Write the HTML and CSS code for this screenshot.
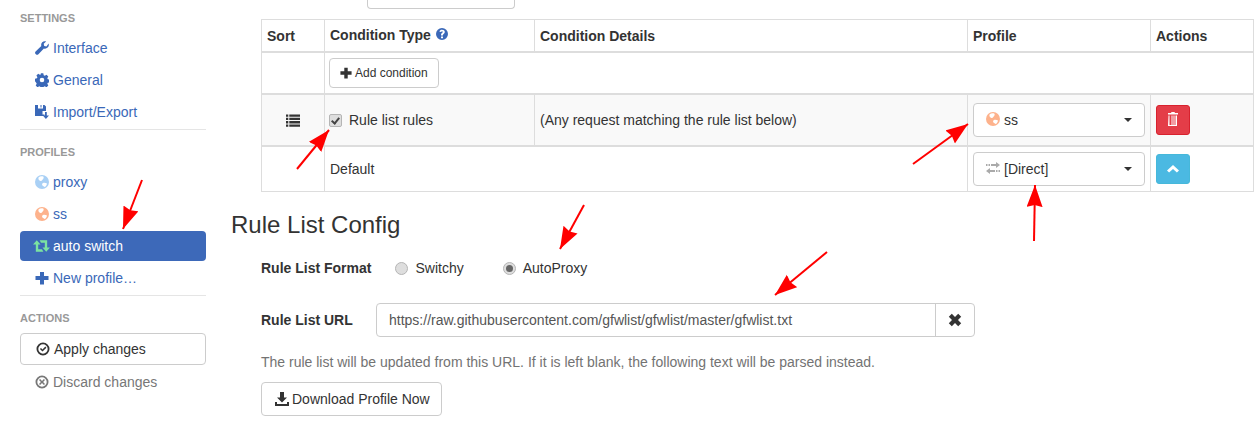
FILE: index.html
```html
<!DOCTYPE html>
<html>

<head>
    <meta charset="utf-8">
    <meta name="viewport" content="width=device-width,initial-scale=1.0">
    <title>auto switch</title>
    <link rel="stylesheet" href="styles.css">
</head>

<body>
    <svg class="defs" width="0" height="0">
        <symbol id="i-wrench" viewBox="0 0 14 14"><path d="M13.6 2.600c.5 1.500.1 3-1 4-1 1-2.400 1.300-3.700.9L3.400 13.200c-.7.7-1.800.7-2.500 0l-.3-.3c-.7-.7-.7-1.800 0-2.500L6.300 5C5.900 3.700 6.200 2.300 7.200 1.300 8.200.3 9.700-.1 11.100.4L8.700 2.800l.5 2.200 2.200.5z"/></symbol>
        <symbol id="i-cog" viewBox="0 0 14 14"><path fill-rule="evenodd" d="M5.700.3h2.600l.4 1.900 1.100.5 1.700-1 1.800 1.800-1 1.700.5 1.100 1.900.4v2.600l-1.900.4-.5 1.100 1 1.700-1.800 1.800-1.700-1-1.100.5-.4 1.900H5.700l-.4-1.900-1.100-.5-1.700 1-1.800-1.800 1-1.700-.5-1.100L0 8.300V5.700l1.900-.4.500-1.100-1-1.700 1.800-1.800 1.700 1 1.100-.5zM7 4.700a2.300 2.300 0 1 0 0 4.600 2.300 2.300 0 0 0 0-4.600z"/></symbol>
        <symbol id="i-floppy" viewBox="0 0 14 14"><path fill-rule="evenodd" d="M0 0h9.500L11 1.500V6H7.500v3.500h2V11H0zM3 0v3.500h5V0H6.500v2.500h-1V0z"/><path d="M10 7h1.800v3.500H14L10.900 14 7.800 10.500H10z"/></symbol>
        <symbol id="i-globe" viewBox="0 0 14 14"><path fill-rule="evenodd" d="M7 0a7 7 0 1 1 0 14A7 7 0 0 1 7 0zM3.500 2.500C3 4 4 5.500 5.500 6c1 .3 1.300-.5 2-1.200C8.300 4 9 3 8.500 1.800 7 1 5 1.200 3.500 2.500zM8 8c-1 .5-1.200 1.500-.5 2.500.5.800 1.500 1 2.500 1.500 1-.8 1.800-2 2-3.500C11 8 9.500 7.500 8 8z"/></symbol>
        <symbol id="i-retweet" viewBox="0 0 18 13"><path d="M4 .5L8 5H5.500v5h4l1.500 2.500H3V5H0z"/><path d="M14 12.500L10 8h2.500V3H8.500L7 .5h8V8h3z"/></symbol>
        <symbol id="i-plus" viewBox="0 0 14 14"><path d="M5 1h4v4h4.500v4H9v4.500H5V9H.5V5H5z"/></symbol>
        <symbol id="i-ok" viewBox="0 0 14 14"><path fill-rule="evenodd" d="M7 .5a6.500 6.500 0 1 1 0 13 6.500 6.500 0 0 1 0-13zm0 1.800a4.700 4.700 0 1 0 0 9.400 4.700 4.700 0 0 0 0-9.400z"/><path d="M3.900 7l1.100-1.100 1.500 1.500 2.800-2.800 1.100 1.100-3.900 3.900z"/></symbol>
        <symbol id="i-no" viewBox="0 0 14 14"><path fill-rule="evenodd" d="M7 .5a6.500 6.500 0 1 1 0 13 6.500 6.500 0 0 1 0-13zm0 1.800a4.700 4.700 0 1 0 0 9.400 4.700 4.700 0 0 0 0-9.400z"/><path d="M5.100 4L7 5.900 8.900 4 10 5.100 8.100 7 10 8.900 8.900 10 7 8.100 5.100 10 4 8.900 5.900 7 4 5.100z"/></symbol>
        <symbol id="i-help" viewBox="0 0 12 12"><path fill-rule="evenodd" d="M6 0a6 6 0 1 1 0 12A6 6 0 0 1 6 0zM5 8.500v1.700h2V8.500zM6 1.800c-1.300 0-2.300.6-2.500 1.900l1.600.3c.1-.5.400-.7.900-.7s.8.200.8.600c0 .8-1.800 1-1.800 2.800v.8h2v-.6c0-1 1.800-1.200 1.800-3C8.800 2.600 7.600 1.800 6 1.800z"/></symbol>
        <symbol id="i-list" viewBox="0 0 14 14"><path d="M0 .5h2.300v2.300H0zM3.300.5H14v2.300H3.300zM0 3.800h2.300v2.300H0zM3.300 3.800H14v2.300H3.300zM0 7.100h2.300v2.300H0zM3.300 7.100H14v2.300H3.300zM0 10.400h2.300v2.300H0zM3.300 10.400H14v2.300H3.300z"/></symbol>
        <symbol id="i-trash" viewBox="0 0 12 14"><path d="M4.500 0h3l.5 1h3v1.500H1V1h3zM1.500 3.500h1V13h2V3.500h1V13h1V3.500h1V13h1V3.500h1.500V14h-9z"/></symbol>
        <symbol id="i-transfer" viewBox="0 -1 14 14"><path d="M0 2h1.500v2H0zM2.500 2H4v2H2.500zM5 2h5V0l4 3-4 3V4H5zM4 6v2h5v2H4v2L0 9zM10 8h1.500v2H10zM12.500 8H14v2h-1.500z"/></symbol>
        <symbol id="i-chevron" viewBox="0 0 12 8"><path d="M6 0l6 5.500L9.900 7.600 6 4 2.100 7.600 0 5.500z"/></symbol>
        <symbol id="i-remove" viewBox="0 0 14 14"><path d="M3.800.8L7 4l3.200-3.200 3 3L10 7l3.200 3.200-3 3L7 10l-3.200 3.200-3-3L4 7 .8 3.800z"/></symbol>
        <symbol id="i-download" viewBox="0 0 14 14"><path d="M5 0h4v5.500h3L7 10.500 2 5.500h3z"/><path d="M0 10h2v2h10v-2h2v4H0z"/></symbol>
        <marker id="head" markerUnits="userSpaceOnUse" markerWidth="24" markerHeight="18" refX="22" refY="8" orient="auto"><path d="M0 0L22 8L0 16L2 8z" fill="#f00"/></marker>
    </svg>

    <div id="wrap">
        <nav class="side">
            <div class="nav-label first">Settings</div>
            <a class="nav-item"><svg class="icon"><use href="#i-wrench"/></svg>Interface</a>
            <a class="nav-item"><svg class="icon"><use href="#i-cog"/></svg>General</a>
            <a class="nav-item"><svg class="icon"><use href="#i-floppy"/></svg>Import/Export</a>
            <div class="divider"></div>
            <div class="nav-label">Profiles</div>
            <a class="nav-item"><svg class="icon proxy"><use href="#i-globe"/></svg>proxy</a>
            <a class="nav-item"><svg class="icon ss"><use href="#i-globe"/></svg>ss</a>
            <a class="nav-item active"><svg class="icon wide"><use href="#i-retweet"/></svg>auto switch</a>
            <a class="nav-item"><svg class="icon"><use href="#i-plus"/></svg>New profile…</a>
            <div class="divider"></div>
            <div class="nav-label">Actions</div>
            <a class="apply"><svg class="icon"><use href="#i-ok"/></svg>Apply changes</a>
            <a class="nav-item discard"><svg class="icon"><use href="#i-no"/></svg>Discard changes</a>
        </nav>

        <main class="content">
            <div class="cut-btn"></div>
            <table class="rules">
                <colgroup>
                    <col class="c-sort">
                    <col class="c-type">
                    <col class="c-details">
                    <col class="c-profile">
                    <col class="c-actions">
                </colgroup>
                <thead>
                    <tr>
                        <th>Sort</th>
                        <th><span class="th-type">Condition Type<svg class="help"><use href="#i-help"/></svg></span></th>
                        <th>Condition Details</th>
                        <th>Profile</th>
                        <th>Actions</th>
                    </tr>
                </thead>
                <tbody>
                    <tr class="add-row">
                        <td></td>
                        <td colspan="4"><button class="btn btn-sm"><svg class="icon"><use href="#i-plus"/></svg>Add condition</button></td>
                    </tr>
                </tbody>
                <tbody>
                    <tr class="rule-row">
                        <td class="sort"><svg class="list"><use href="#i-list"/></svg></td>
                        <td><label class="check"><input type="checkbox" checked disabled>Rule list rules</label></td>
                        <td>(Any request matching the rule list below)</td>
                        <td><div class="pick"><svg class="icon ss"><use href="#i-globe"/></svg>ss<i class="caret"></i></div></td>
                        <td><button class="act danger"><svg class="trash"><use href="#i-trash"/></svg></button></td>
                    </tr>
                    <tr class="default-row">
                        <td></td>
                        <td colspan="2">Default</td>
                        <td><div class="pick"><svg class="icon direct"><use href="#i-transfer"/></svg>[Direct]<i class="caret"></i></div></td>
                        <td><button class="act info"><svg class="chev"><use href="#i-chevron"/></svg></button></td>
                    </tr>
                </tbody>
            </table>

            <h3 class="title">Rule List Config</h3>

            <form class="config">
                <div class="format">
                    <span class="field-label">Rule List Format</span>
                    <label class="radio r1"><input type="radio" name="fmt" disabled>Switchy</label>
                    <label class="radio"><input type="radio" name="fmt" checked disabled>AutoProxy</label>
                </div>
                <div class="url-row">
                    <span class="field-label url-label">Rule List URL</span>
                    <div class="url-group">
                        <input class="url" type="text" value="https://raw.githubusercontent.com/gfwlist/gfwlist/master/gfwlist.txt">
                        <span class="clear"><svg class="x"><use href="#i-remove"/></svg></span>
                    </div>
                </div>
                <p class="hint">The rule list will be updated from this URL. If it is left blank, the following text will be parsed instead.</p>
                <button class="btn dl" type="button"><svg class="icon"><use href="#i-download"/></svg>Download Profile Now</button>
            </form>
        </main>
    </div>

    <svg class="arrows" width="1259" height="429">
        <line x1="142" y1="180" x2="123" y2="229" marker-end="url(#head)"/>
        <line x1="297" y1="169" x2="329" y2="130" marker-end="url(#head)"/>
        <line x1="913" y1="164" x2="968" y2="124" marker-end="url(#head)"/>
        <line x1="1034" y1="241" x2="1035" y2="185" marker-end="url(#head)"/>
        <line x1="584" y1="205" x2="560" y2="249" marker-end="url(#head)"/>
        <line x1="827" y1="252" x2="775" y2="295" marker-end="url(#head)"/>
    </svg>
</body>

</html>
```

FILE: styles.css
```css
html,
body {
    margin: 0;
    padding: 0;
    height: 100%;
    overflow: hidden;
}

body {
    font-family: "Liberation Sans", Arial, sans-serif;
    font-size: 14px;
    color: #333;
    background: #fff;
}

.defs {
    position: absolute;
}

#wrap {
    display: flex;
    align-items: flex-start;
}

/* sidebar */
.side {
    width: 186px;
    margin-left: 20px;
    flex: none;
}

.nav-label {
    font-size: 11px;
    font-weight: bold;
    color: #999;
    text-transform: uppercase;
    line-height: 14px;
    margin-top: 15px;
    margin-bottom: 8px;
}

.nav-label.first {
    margin-top: 11px;
}

.nav-item {
    display: flex;
    align-items: center;
    height: 30px;
    margin-bottom: 2px;
    padding-left: 15px;
    border-radius: 4px;
    color: #3a68b8;
}

.nav-item.active {
    background: #3d69b9;
    color: #fff;
}

.icon {
    width: 14px;
    height: 14px;
    margin-right: 4px;
    fill: currentColor;
    flex: none;
}

.icon.wide {
    width: 17px;
    margin-left: -2px;
    margin-right: 3px;
    fill: #7be3a1;
}

.icon.proxy {
    fill: #a9d0f5;
}

.icon.ss {
    fill: #fdb28c;
}

.pick .icon {
    margin-top: -2px;
}

.icon.direct {
    fill: #aaa;
}

.divider {
    height: 1px;
    background: #e5e5e5;
    margin-top: 1px;
}

.apply {
    display: flex;
    align-items: center;
    height: 30px;
    border: 1px solid #ccc;
    border-radius: 4px;
    padding-left: 15px;
}

.discard {
    color: #777;
    margin-top: 2px;
}

/* main column */
.content {
    flex: 1;
    margin-left: 25px;
    margin-right: 5px;
    min-width: 0;
}

.cut-btn {
    width: 146px;
    height: 8px;
    margin-left: 136px;
    border: 1px solid #ccc;
    border-top: 0;
    border-radius: 0 0 4px 4px;
}

.rules {
    margin-top: 10px;
    margin-left: 30px;
    width: 992px;
    table-layout: fixed;
    border-collapse: collapse;
}

.c-sort { width: 63px; }
.c-type { width: 210px; }
.c-details { width: 433px; }
.c-profile { width: 183px; }
.c-actions { width: 103px; }

.rules th,
.rules td {
    border: 1px solid #ddd;
    padding: 0 5px;
    text-align: left;
    vertical-align: middle;
}

.rules thead th {
    height: 31px;
    border-bottom-width: 2px;
}

.rules tbody+tbody {
    border-top: 2px solid #ddd;
}

.th-type {
    position: relative;
    top: -1px;
}

.add-row td {
    height: 40px;
    border-bottom-width: 2px;
}

.rule-row td {
    height: 50px;
    background: #f9f9f9;
    border-bottom-width: 2px;
}

.default-row td {
    height: 44px;
}

.sort {
    text-align: center !important;
}

.list {
    width: 14px;
    height: 14px;
    fill: #333;
    vertical-align: middle;
}

.help {
    width: 12px;
    height: 12px;
    fill: #3a68b8;
    margin-left: 5px;
}

.btn {
    display: inline-flex;
    align-items: center;
    height: 34px;
    padding: 0 12px;
    border: 1px solid #ccc;
    border-radius: 4px;
    background: #fff;
    color: #333;
    font: 14px "Liberation Sans", Arial, sans-serif;
}

.btn .icon {
    margin-right: 3px;
}

.btn.dl {
    padding: 0 11px 0 13px;
}

.btn-sm {
    height: 30px;
    margin-left: -1px;
    padding: 0 10px;
    font-size: 12px;
}

.btn-sm .icon {
    width: 12px;
    height: 12px;
}

.check {
    display: flex;
    align-items: center;
    margin-left: -1px;
}

.check input,
.radio input {
    appearance: none;
    position: relative;
    flex: none;
    width: 13px;
    height: 13px;
    box-sizing: border-box;
    margin: 0 7px 0 0;
    border: 1px solid #b5b5b5;
    background: #dedede;
}

.check input {
    border-radius: 2px;
}

.check input::after {
    content: "";
    position: absolute;
    left: 3px;
    top: 1px;
    width: 3px;
    height: 6px;
    border: solid #444;
    border-width: 0 2px 2px 0;
    transform: rotate(40deg);
}

.radio input {
    border-radius: 50%;
}

.radio input:checked::after {
    content: "";
    position: absolute;
    left: 2px;
    top: 2px;
    width: 7px;
    height: 7px;
    border-radius: 50%;
    background: #666;
}

.pick {
    display: flex;
    align-items: center;
    height: 32px;
    padding: 0 12px 0 12px;
    border: 1px solid #ccc;
    border-radius: 4px;
    background: #fff;
}

.caret {
    margin-left: auto;
    border-top: 4px solid #333;
    border-left: 4px solid transparent;
    border-right: 4px solid transparent;
}

.act {
    display: flex;
    align-items: center;
    justify-content: center;
    width: 34px;
    height: 30px;
    padding: 0;
    border: 1px solid;
    border-radius: 3px;
}

.danger {
    background: #e43d48;
    border-color: #d8222e;
}

.info {
    background: #4bb9e2;
    border-color: #46b8da;
}

.trash {
    width: 12px;
    height: 14px;
    margin-bottom: 2px;
    fill: #fff;
}

.chev {
    width: 12px;
    height: 8px;
    fill: #fff;
}

.title {
    margin: 19px 0 0;
    font-size: 24px;
    font-weight: 500;
    line-height: 28px;
}

.config {
    margin-left: 30px;
}

.format {
    display: flex;
    align-items: center;
    height: 20px;
    margin-top: 19px;
}

.field-label {
    font-weight: bold;
}

.radio {
    display: flex;
    align-items: center;
    margin-left: 24px;
}

.radio.r1 {
    margin-right: 15px;
}

.url-row {
    display: flex;
    align-items: center;
    margin-top: 25px;
}

.url-label {
    width: 115px;
}

.url-group {
    display: flex;
    width: 599px;
    height: 34px;
    box-sizing: border-box;
    border: 1px solid #ccc;
    border-radius: 4px;
}

.url {
    flex: 1;
    min-width: 0;
    border: 0;
    outline: 0;
    background: none;
    padding: 0 12px;
    color: #555;
    font: 14px "Liberation Sans", Arial, sans-serif;
}

.clear {
    width: 38px;
    display: flex;
    align-items: center;
    justify-content: center;
    border-left: 1px solid #ccc;
}

.x {
    width: 14px;
    height: 14px;
    fill: #333;
}

.hint {
    margin: 17px 0 12px;
    line-height: 16px;
    color: #737373;
}

/* annotation arrows drawn over the screenshot */
.arrows {
    position: absolute;
    left: 0;
    top: 0;
    pointer-events: none;
}

.arrows line {
    stroke: #f00;
    stroke-width: 2;
}
```
